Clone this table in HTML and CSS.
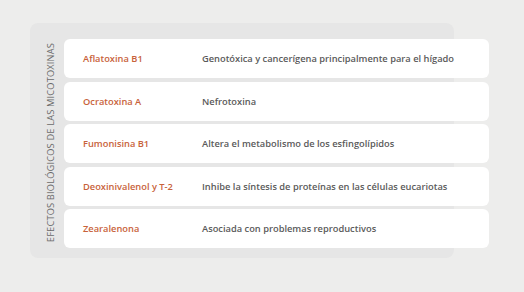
FILE: index.html
```html
<!DOCTYPE html>
<html lang="es">
<head>
    <meta charset="utf-8">
    <title>Micotoxinas</title>
    <link rel="stylesheet" href="styles.css">
</head>
<body>
    <section class="panel">
        <div class="side-title">
            <span>Efectos biológicos de las micotoxinas</span>
        </div>
        <div class="rows">
            <div class="row">
                <span class="toxin">Aflatoxina B1</span>
                <span class="effect">Genotóxica y cancerígena principalmente para el hígado</span>
            </div>
            <div class="row">
                <span class="toxin">Ocratoxina A</span>
                <span class="effect">Nefrotoxina</span>
            </div>
            <div class="row">
                <span class="toxin">Fumonisina B1</span>
                <span class="effect">Altera el metabolismo de los esfingolípidos</span>
            </div>
            <div class="row">
                <span class="toxin">Deoxinivalenol y T-2</span>
                <span class="effect">Inhibe la síntesis de proteínas en las células eucariotas</span>
            </div>
            <div class="row">
                <span class="toxin">Zearalenona</span>
                <span class="effect">Asociada con problemas reproductivos</span>
            </div>
        </div>
    </section>
</body>
</html>
```

FILE: styles.css
```css
/* Page */
body {
    margin: 0;
    padding: 23px 0 0 30px;
    background: #ededec;
    font-family: "Open Sans", "Liberation Sans", sans-serif;
}

/* Grey card that holds the table */
.panel {
    display: flex;
    width: 424px;
    height: 235px;
    box-sizing: border-box;
    padding: 16px 0 11px 0;
    background: #e6e6e6;
    border-radius: 8px;
}

/* Rotated heading on the left */
.side-title {
    width: 34px;
    flex-shrink: 0;
    display: flex;
    align-items: center;
    justify-content: center;
    padding-left: 7px;
    box-sizing: border-box;
}

.side-title span {
    writing-mode: vertical-rl;
    transform: rotate(180deg);
    text-transform: uppercase;
    font-size: 9.3px;
    letter-spacing: 0.15px;
    color: #6a6a6a;
    white-space: nowrap;
}

/* Table rows */
.rows {
    display: flex;
    flex-direction: column;
    gap: 3.5px;
}

.row {
    display: flex;
    align-items: center;
    width: 425px;
    height: 39px;
    flex-shrink: 0;
    padding-left: 19px;
    box-sizing: border-box;
    background: #fff;
    border-radius: 6px;
    font-size: 9.3px;
    font-weight: 600;
}

.toxin {
    width: 119px;
    color: #c8623a;
}

.effect {
    color: #5a5a5a;
}
```
